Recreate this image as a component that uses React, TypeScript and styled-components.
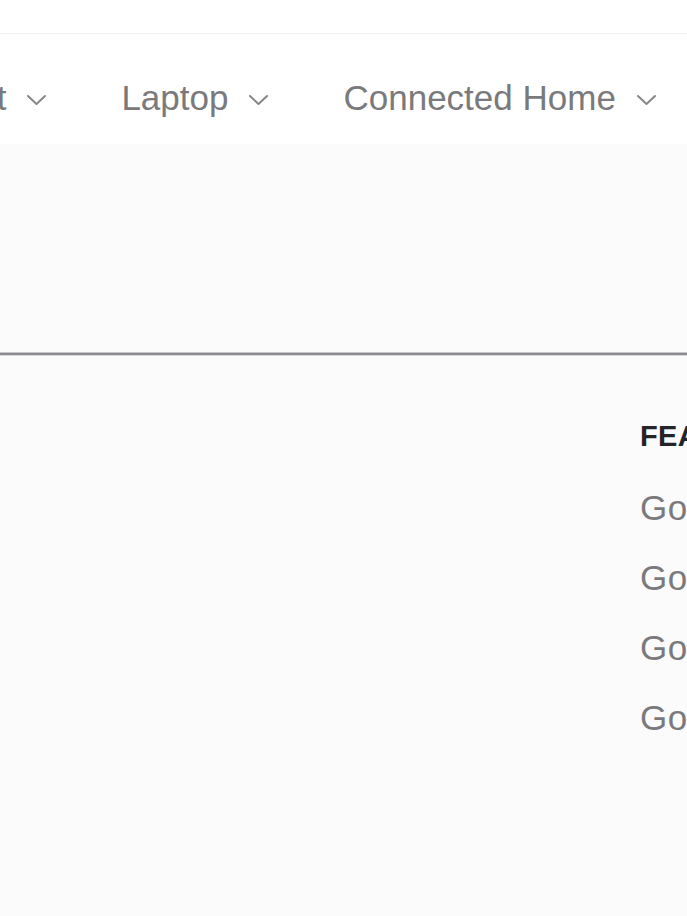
import React from "react";
import styled, { createGlobalStyle } from "styled-components";

const Global = createGlobalStyle`
  html, body { margin: 0; padding: 0; background: #fbfbfc; }
  body { font-family: "Liberation Sans", Arial, sans-serif; }
`;

const Page = styled.div`
  width: 687px;
  height: 916px;
  overflow: hidden;
  display: flex;
  flex-direction: column;
  background: #fbfbfc;
`;

const TopStrip = styled.div`
  height: 33px;
  background: #ffffff;
  border-bottom: 1px solid #f2f2f4;
  flex: none;
`;

const Nav = styled.nav`
  height: 110px;
  flex: none;
  background: #ffffff;
  display: flex;
  align-items: center;
  overflow: hidden;
  padding-top: 18px;
  box-sizing: border-box;
`;

const NavList = styled.div`
  display: flex;
  align-items: center;
  gap: 74px;
  margin-left: -87px;
  white-space: nowrap;
`;

const NavItem = styled.div`
  display: flex;
  align-items: center;
  gap: 20px;
  font-size: 35px;
  color: #7a7a7d;
`;

const Chevron = styled.svg`
  width: 21px;
  height: 12px;
  flex: none;
  margin-top: 4px;
`;

const Hero = styled.div`
  height: 208px;
  flex: none;
`;

const Divider = styled.div`
  height: 2px;
  flex: none;
  background: #8a8a91;
  border-top: 1px solid #c6c6cb;
  border-bottom: 1px solid #d8d8dc;
`;

const Content = styled.div`
  flex: 1;
  display: flex;
  justify-content: flex-start;
  padding-left: 640px;
  padding-top: 62px;
  overflow: hidden;
`;

const Column = styled.div`
  display: flex;
  flex-direction: column;
  white-space: nowrap;
`;

const ColumnTitle = styled.div`
  font-size: 29px;
  font-weight: 700;
  color: #242428;
  letter-spacing: 0.3px;
  height: 36px;
  line-height: 36px;
  margin-bottom: 34px;
`;

const ColumnLink = styled.div`
  font-size: 35px;
  letter-spacing: 0.6px;
  color: #7a7a7d;
  height: 40px;
  line-height: 40px;
  margin-bottom: 30px;
`;

const ChevronIcon = () => (
  <Chevron viewBox="0 0 21 12" fill="none">
    <path d="M2 2 L10.5 10 L19 2" stroke="#87878a" strokeWidth="2" strokeLinecap="round" strokeLinejoin="round" />
  </Chevron>
);

const navItems = ["Tablet", "Laptop", "Connected Home"];
const links = ["Google Pixel", "Google Nest", "Google Home", "Google Store"];

export default function App() {
  return (
    <>
      <Global />
      <Page>
        <TopStrip />
        <Nav>
          <NavList>
            {navItems.map((n) => (
              <NavItem key={n}>
                {n}
                <ChevronIcon />
              </NavItem>
            ))}
          </NavList>
        </Nav>
        <Hero />
        <Divider />
        <Content>
          <Column>
            <ColumnTitle>FEATURED</ColumnTitle>
            {links.map((l) => (
              <ColumnLink key={l}>{l}</ColumnLink>
            ))}
          </Column>
        </Content>
      </Page>
    </>
  );
}
